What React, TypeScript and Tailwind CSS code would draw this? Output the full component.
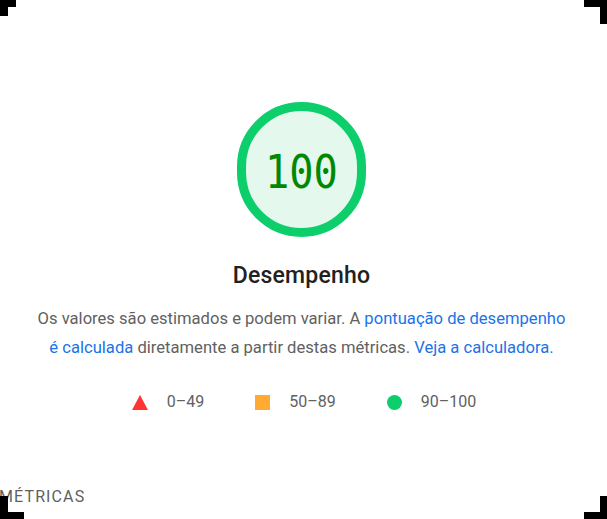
import React from "react";

function Corners() {
  return (
    <>
      <div className="absolute left-0 top-0 h-[7px] w-[16px] bg-black" />
      <div className="absolute left-0 top-0 h-[16px] w-[8px] bg-black" />
      <div className="absolute right-0 top-0 h-[7px] w-[23px] bg-black" />
      <div className="absolute right-0 top-0 h-[24px] w-[7px] bg-black" />
      <div className="absolute bottom-0 left-0 h-[7px] w-[24px] bg-black" />
      <div className="absolute bottom-0 left-0 h-[23px] w-[8px] bg-black" />
      <div className="absolute bottom-0 right-0 h-[7px] w-[23px] bg-black" />
      <div className="absolute bottom-0 right-0 h-[23px] w-[7px] bg-black" />
    </>
  );
}

function Legend() {
  return (
    <div className="mt-[30px] ml-[5px] flex items-center text-[16px] leading-[20px] text-[#616161]">
      <div className="flex items-center">
        <svg width="16" height="15" viewBox="0 0 16 15" className="mr-[19px]">
          <polygon points="8,0 16,15 0,15" fill="#ff3333" />
        </svg>
        <span>0–49</span>
      </div>
      <div className="ml-[51px] flex items-center">
        <div className="mr-[19px] h-[15px] w-[15px] bg-[#ffaa33]" />
        <span>50–89</span>
      </div>
      <div className="ml-[51px] flex items-center">
        <div className="mr-[19px] h-[15px] w-[15px] rounded-full bg-[#0cce6b]" />
        <span>90–100</span>
      </div>
    </div>
  );
}

export default function App() {
  return (
    <div
      className="relative h-[519px] w-[607px] overflow-hidden bg-white"
      style={{ fontFamily: "Roboto, 'Liberation Sans', sans-serif" }}
    >
      <div className="flex flex-col items-center pt-[102px] pr-[4px]">
        <div className="flex h-[135px] w-[129px] items-center justify-center rounded-full border-[9px] border-[#0cce6b] bg-[#e5f8ee]">
          <span
            className="mt-[4px] scale-x-[0.86] text-[47px] leading-none text-[#008800]"
            style={{ fontFamily: "'DejaVu Sans Mono', monospace" }}
          >
            100
          </span>
        </div>

        <h1 className="mt-[26px] text-[23px] font-medium leading-[26px] tracking-[0.01em] text-[#212121]">
          Desempenho
        </h1>

        <p className="mt-[15px] whitespace-nowrap text-center text-[16.6px] leading-[29px] text-[#616161]">
          Os valores são estimados e podem variar. A{" "}
          <a className="text-[#1a73e8]">
            pontuação de desempenho
            <br />é calculada
          </a>{" "}
          diretamente a partir destas métricas.{" "}
          <a className="text-[#1a73e8]">Veja a calculadora.</a>
        </p>

        <Legend />
      </div>

      <div className="mt-[75px] -ml-[1px] text-[16px] leading-[20px] tracking-[0.07em] text-[#5f5f5f]">
        MÉTRICAS
      </div>

      <Corners />
    </div>
  );
}
